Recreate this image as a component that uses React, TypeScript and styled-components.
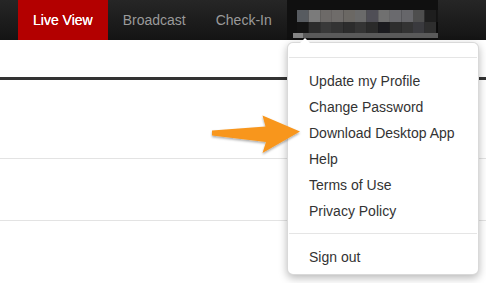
import styled, { createGlobalStyle } from "styled-components";

const GlobalStyle = createGlobalStyle`
  html, body { margin: 0; padding: 0; background: #fff; }
  body { font-family: "Liberation Sans", Arial, sans-serif; overflow: hidden; }
`;

type TNavItem = { label: string; active?: boolean };

const NavItems: TNavItem[] = [
  { label: "Live View", active: true },
  { label: "Broadcast" },
  { label: "Check-In" },
];

const MenuGroups: string[][] = [
  [
    "Update my Profile",
    "Change Password",
    "Download Desktop App",
    "Help",
    "Terms of Use",
    "Privacy Policy",
  ],
  ["Sign out"],
];

// pixelated (blurred) user name, one row of block colours per band
const BlurRows: { y: number; h: number; colors: string[] }[] = [
  {
    y: 10,
    h: 12,
    colors: ["#575b60", "#7b7b7b", "#6d6a68", "#6f6c6a", "#6b6864", "#6a6a6a", "#4f4e56", "#707070", "#6a6a6e", "#66666a", "#4e4e4e", "#1e1e1e", "#151515"],
  },
  {
    y: 22,
    h: 11,
    colors: ["#131313", "#2c2c2c", "#393939", "#333", "#2c2c2c", "#343434", "#2a2a2a", "#1b1b1f", "#2d2d2d", "#333", "#3a3a3e", "#2e2e2e", "#0a0a0a"],
  },
];

const App = () => {
  return (
    <Page>
      <GlobalStyle />
      <NavBar>
        {NavItems.map((item) => (
          <NavLink key={item.label} active={item.active}>
            {item.label}
          </NavLink>
        ))}
        <UserToggle>
          <svg width="156" height="40" viewBox="0 0 156 40">
            {BlurRows.map((row) =>
              row.colors.map((c, i) => (
                <rect key={`${row.y}-${i}`} x={10 + i * 11.6} y={row.y} width="11.7" height={row.h} fill={c} />
              ))
            )}
            <rect x="6" y="33" width="155" height="5" fill="#5a5a5a" />
            <rect x="6" y="33" width="10" height="5" fill="#858585" />
          </svg>
        </UserToggle>
      </NavBar>

      <Content>
        <Header />
        <Row height={78} />
        <Row height={61} />
      </Content>

      <Dropdown>
        {MenuGroups.map((group, gi) => (
          <MenuGroup key={gi} last={gi === MenuGroups.length - 1}>
            {group.map((label) => (
              <MenuItem key={label}>{label}</MenuItem>
            ))}
          </MenuGroup>
        ))}
      </Dropdown>

      <Arrow width="100" height="50" viewBox="0 0 100 50">
        <defs>
          <filter id="sh" x="-10%" y="-20%" width="130%" height="150%">
            <feDropShadow dx="0" dy="1.5" stdDeviation="1" floodColor="#000" floodOpacity="0.35" />
          </filter>
        </defs>
        <path
          d="M11 30.5 L11 35.5 L65 42 L61.5 53 L99 31.5 L61.5 15.5 L64.5 26.5 Z"
          transform="translate(0 -4)"
          fill="#f8961d"
          filter="url(#sh)"
        />
      </Arrow>
    </Page>
  );
};

const Page = styled.div`
  position: relative;
  width: 486px;
  height: 283px;
  overflow: hidden;
`;

const NavBar = styled.nav`
  display: flex;
  align-items: stretch;
  height: 40px;
  padding-left: 18px;
  background: linear-gradient(#262626, #141414);
`;

const NavLink = styled.a<{ active?: boolean }>`
  display: flex;
  align-items: center;
  padding: 0 15px;
  font-size: 14px;
  color: ${({ active }) => (active ? "#fff" : "#9a9a9a")};
  background: ${({ active }) => (active ? "#b30000" : "transparent")};
  ${({ active }) => active && "text-shadow: 0 0 0.4px #fff;"}
`;

const UserToggle = styled.div`
  position: relative;
  width: 151px;
  background: #101010;
  overflow: hidden;

  svg {
    display: block;
  }
`;

const Content = styled.div`
  display: flex;
  flex-direction: column;
`;

const Header = styled.div`
  height: 37px;
  border-bottom: 3px solid #333;
`;

const Row = styled.div<{ height: number }>`
  height: ${({ height }) => height}px;
  border-bottom: 1px solid #e3e3e3;
`;

const Dropdown = styled.div`
  position: absolute;
  left: 287px;
  top: 42px;
  width: 190px;
  padding-top: 14px;
  background: #fff;
  border: 1px solid rgba(0, 0, 0, 0.15);
  border-radius: 6px;
  box-shadow: 0 3px 8px rgba(0, 0, 0, 0.28);

  &::before {
    content: "";
    position: absolute;
    left: 12px;
    top: -5px;
    border-left: 5px solid transparent;
    border-right: 5px solid transparent;
    border-bottom: 5px solid #fff;
  }
`;

const MenuGroup = styled.div<{ last?: boolean }>`
  display: flex;
  flex-direction: column;
  margin: 0 1px;
  padding: 10px 0 ${({ last }) => (last ? 4 : 9)}px;
  border-top: 1px solid #e5e5e5;
`;

const MenuItem = styled.a`
  display: block;
  padding: 0 20px;
  line-height: 26px;
  font-size: 14px;
  color: #333;
  white-space: nowrap;
`;

const Arrow = styled.svg`
  position: absolute;
  left: 201px;
  top: 104px;
  overflow: visible;
`;

export default App;
